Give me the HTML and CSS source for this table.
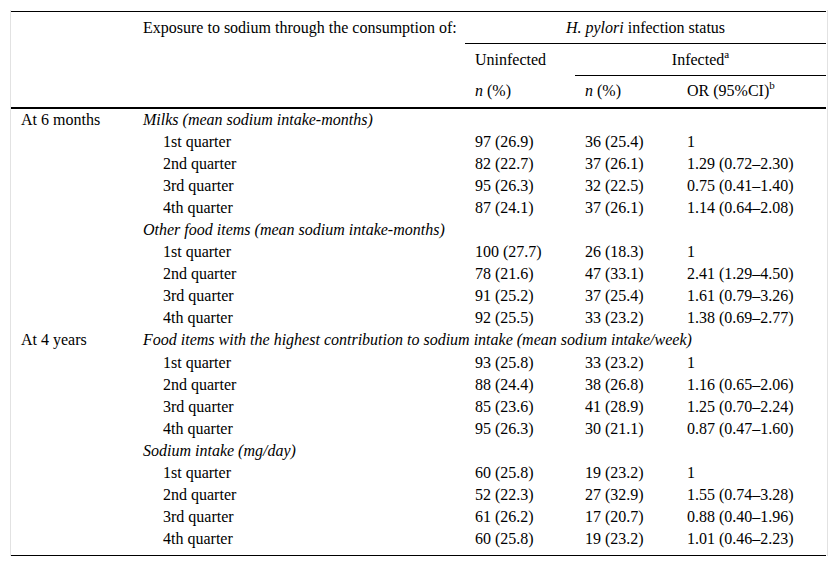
FILE: index.html
```html
<!DOCTYPE html>
<html>
<head>
<meta charset="utf-8">
<link rel="stylesheet" href="styles.css">
</head>
<body>
<div class="frame">
<table class="tbl">
<colgroup>
<col class="c1"><col class="c2"><col class="c3"><col class="c4"><col class="c5">
</colgroup>
<thead>
<tr class="h1">
<th></th>
<th class="l">Exposure to sodium through the consumption of:</th>
<th colspan="3" class="ctr rule"><i>H. pylori</i> infection status</th>
</tr>
<tr class="h2">
<th></th><th></th>
<th class="l">Uninfected</th>
<th colspan="2" class="ctr rule">Infected<sup>a</sup></th>
</tr>
<tr class="h3">
<th></th><th></th>
<th class="l"><i>n</i> (%)</th>
<th class="l"><i>n</i> (%)</th>
<th class="l">OR (95%CI)<sup>b</sup></th>
</tr>
</thead>
<tbody>
<tr><td>At 6 months</td><td><i>Milks (mean sodium intake-months)</i></td><td></td><td></td><td></td></tr>
<tr><td></td><td class="ind">1st quarter</td><td>97 (26.9)</td><td>36 (25.4)</td><td>1</td></tr>
<tr><td></td><td class="ind">2nd quarter</td><td>82 (22.7)</td><td>37 (26.1)</td><td>1.29 (0.72–2.30)</td></tr>
<tr><td></td><td class="ind">3rd quarter</td><td>95 (26.3)</td><td>32 (22.5)</td><td>0.75 (0.41–1.40)</td></tr>
<tr><td></td><td class="ind">4th quarter</td><td>87 (24.1)</td><td>37 (26.1)</td><td>1.14 (0.64–2.08)</td></tr>
<tr><td></td><td><i>Other food items (mean sodium intake-months)</i></td><td></td><td></td><td></td></tr>
<tr><td></td><td class="ind">1st quarter</td><td>100 (27.7)</td><td>26 (18.3)</td><td>1</td></tr>
<tr><td></td><td class="ind">2nd quarter</td><td>78 (21.6)</td><td>47 (33.1)</td><td>2.41 (1.29–4.50)</td></tr>
<tr><td></td><td class="ind">3rd quarter</td><td>91 (25.2)</td><td>37 (25.4)</td><td>1.61 (0.79–3.26)</td></tr>
<tr><td></td><td class="ind">4th quarter</td><td>92 (25.5)</td><td>33 (23.2)</td><td>1.38 (0.69–2.77)</td></tr>
<tr><td>At 4 years</td><td class="wide" colspan="4"><i>Food items with the highest contribution to sodium intake (mean sodium intake/week)</i></td></tr>
<tr><td></td><td class="ind">1st quarter</td><td>93 (25.8)</td><td>33 (23.2)</td><td>1</td></tr>
<tr><td></td><td class="ind">2nd quarter</td><td>88 (24.4)</td><td>38 (26.8)</td><td>1.16 (0.65–2.06)</td></tr>
<tr><td></td><td class="ind">3rd quarter</td><td>85 (23.6)</td><td>41 (28.9)</td><td>1.25 (0.70–2.24)</td></tr>
<tr><td></td><td class="ind">4th quarter</td><td>95 (26.3)</td><td>30 (21.1)</td><td>0.87 (0.47–1.60)</td></tr>
<tr><td></td><td><i>Sodium intake (mg/day)</i></td><td></td><td></td><td></td></tr>
<tr><td></td><td class="ind">1st quarter</td><td>60 (25.8)</td><td>19 (23.2)</td><td>1</td></tr>
<tr><td></td><td class="ind">2nd quarter</td><td>52 (22.3)</td><td>27 (32.9)</td><td>1.55 (0.74–3.28)</td></tr>
<tr><td></td><td class="ind">3rd quarter</td><td>61 (26.2)</td><td>17 (20.7)</td><td>0.88 (0.40–1.96)</td></tr>
<tr class="last"><td></td><td class="ind">4th quarter</td><td>60 (25.8)</td><td>19 (23.2)</td><td>1.01 (0.46–2.23)</td></tr>
</tbody>
</table>
</div>
</body>
</html>
```

FILE: styles.css
```css
html, body {
  margin: 0;
  padding: 0;
  background: #fff;
}
body {
  font-family: "Liberation Serif", "Times New Roman", serif;
  font-size: 16px;
  color: #000;
}
.frame {
  margin: 10px 0 0 10px;
  width: 816px;
  border-left: 1px solid #e2e2e2;
  border-right: 1px solid #e2e2e2;
  padding-top: 1px;
}
.tbl {
  width: 815px;
  border-collapse: collapse;
  table-layout: fixed;
  border-top: 1px solid #000;
  border-bottom: 1px solid #000;
}
.c1 { width: 122px; }
.c2 { width: 332px; }
.c3 { width: 110px; }
.c4 { width: 102px; }
.c5 { width: 149px; }
th, td {
  padding: 0 0 0 10px;
  text-align: left;
  font-weight: normal;
  white-space: nowrap;
  vertical-align: middle;
}
thead tr { height: 32px; }
thead .h1 th { height: 31px; }
thead .h3 th { border-bottom: 2px solid #000; }
th.ctr { text-align: center; padding: 0; }
th.rule { border-bottom: 1px solid #000; }
tbody tr { height: 22.1px; }
tbody td { height: 22.1px; line-height: 22px; }
tbody tr.last td { padding-bottom: 5px; }
td.ind { padding-left: 30px; }
sup {
  font-size: 11px;
  line-height: 0;
  vertical-align: 7px;
}
```
